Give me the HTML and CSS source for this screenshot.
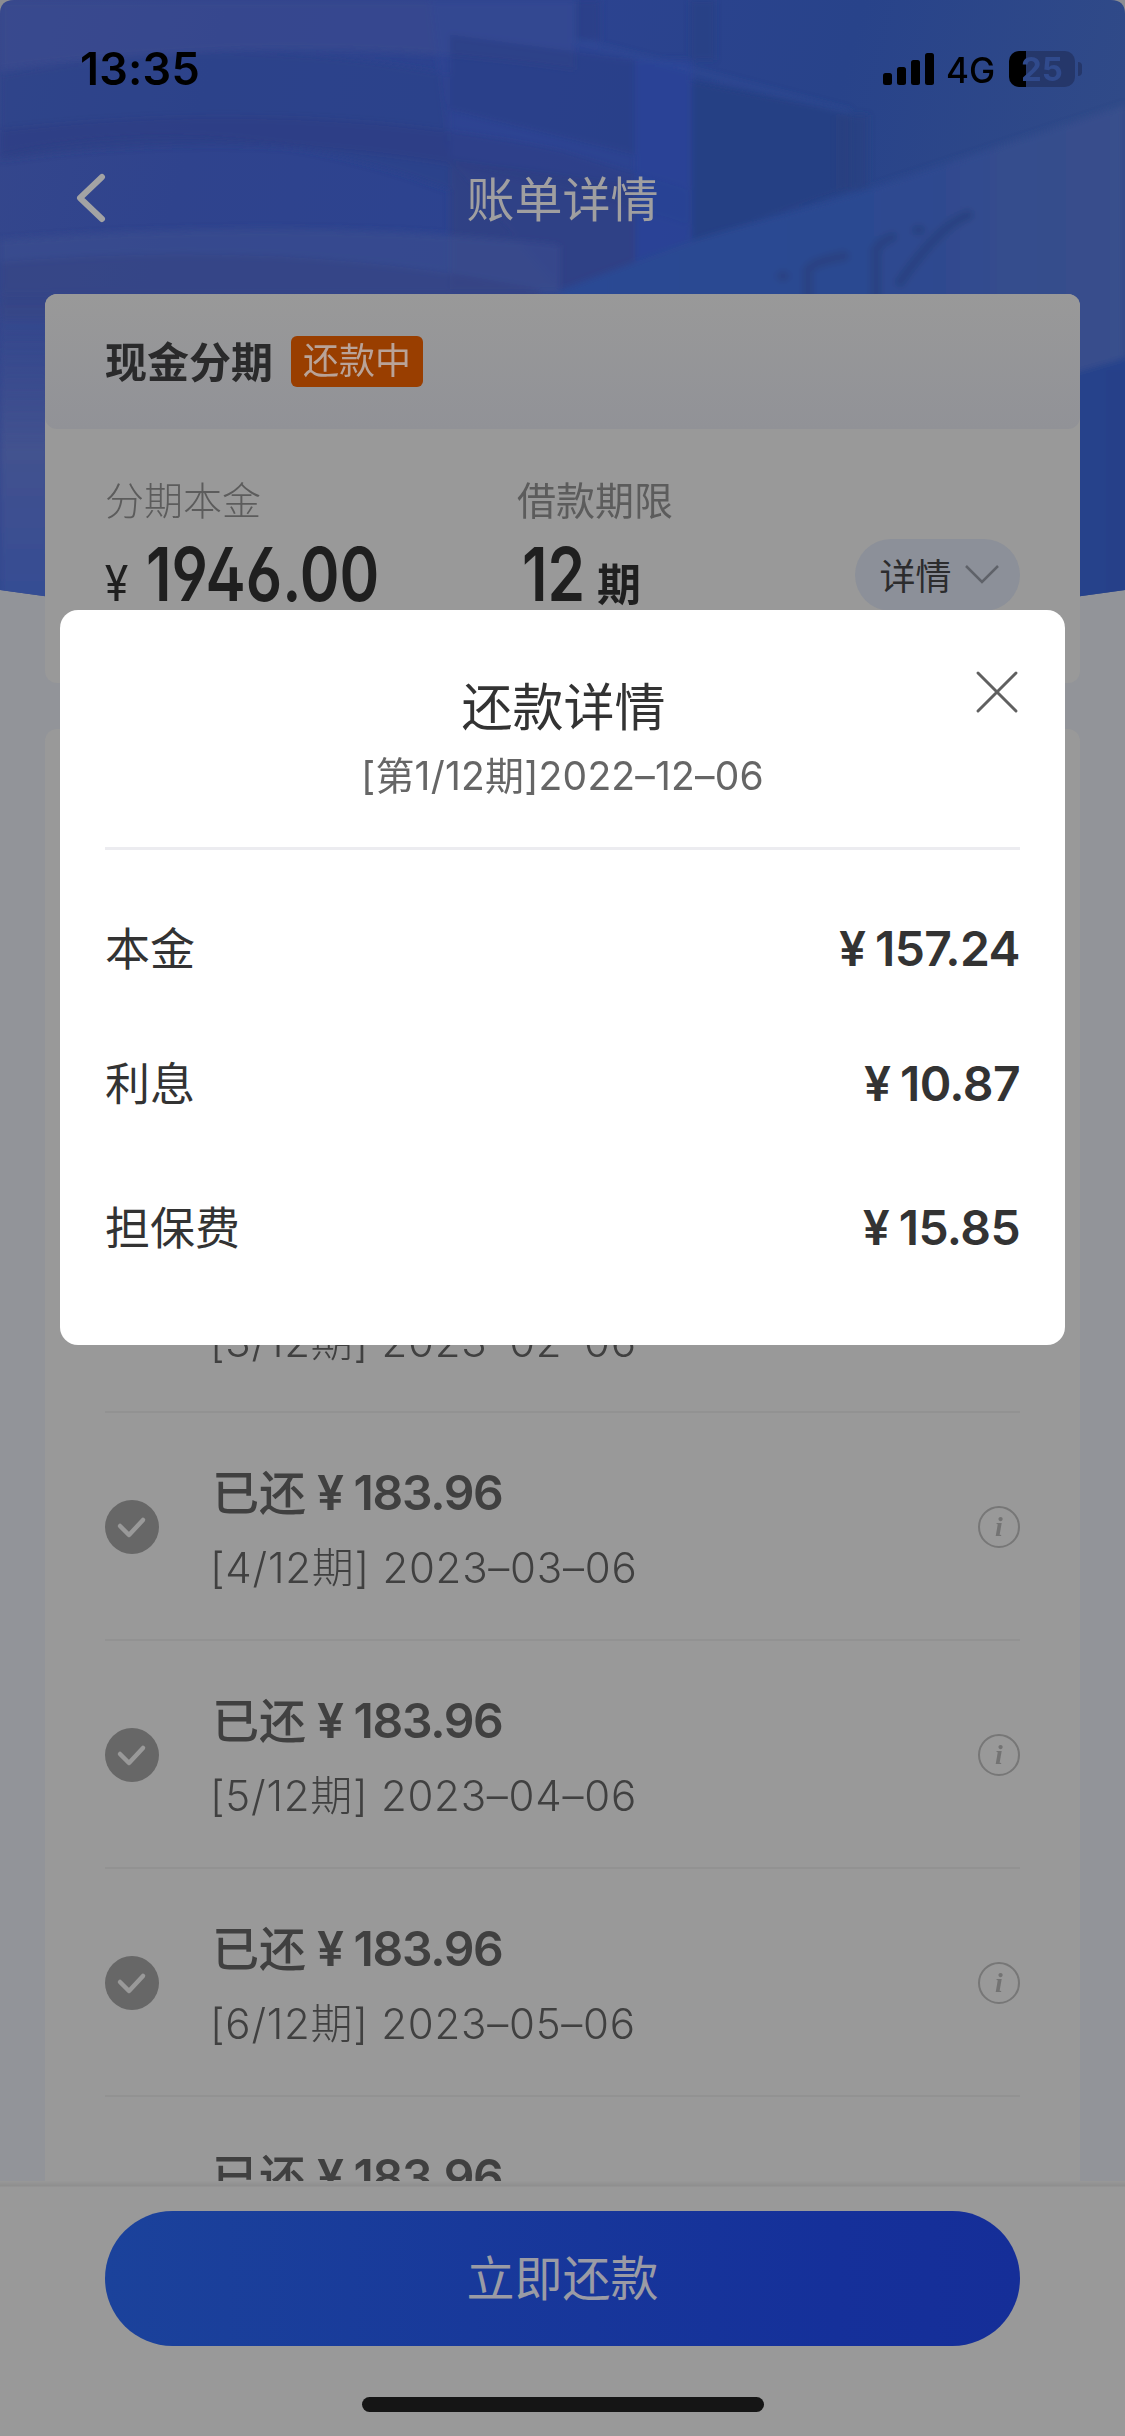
FILE: index.html
```html
<!DOCTYPE html>
<html lang="zh-CN">
<head>
<meta charset="utf-8">
<title>账单详情</title>
<link rel="stylesheet" href="styles.css">
</head>
<body>
<div class="screen">
  <svg class="hero" viewBox="0 0 1125 620" width="1125" height="620" aria-hidden="true">
    <defs>
      <linearGradient id="sky" x1="0" y1="0" x2="1" y2="0.15">
        <stop offset="0" stop-color="#35478c"/>
        <stop offset="0.2" stop-color="#2f438d"/>
        <stop offset="0.5" stop-color="#2c4390"/>
        <stop offset="0.75" stop-color="#28438a"/>
        <stop offset="1" stop-color="#304a88"/>
      </linearGradient>
      <linearGradient id="wall" x1="0" y1="0" x2="1" y2="0">
        <stop offset="0" stop-color="#2b4894"/>
        <stop offset="0.55" stop-color="#2c4891"/>
        <stop offset="1" stop-color="#374f8c"/>
      </linearGradient>
      <linearGradient id="side" x1="0" y1="0" x2="0" y2="1">
        <stop offset="0" stop-color="#3c4f90" stop-opacity="0"/>
        <stop offset="0.5" stop-color="#43528f"/>
        <stop offset="1" stop-color="#334c94"/>
      </linearGradient>
      <clipPath id="sweep"><path d="M0 14Q0 0 14 0H1111Q1125 0 1125 14V590Q562 672 0 590Z"/></clipPath>
      <filter id="soft" x="-10%" y="-10%" width="120%" height="120%"><feGaussianBlur stdDeviation="3"/></filter>
    </defs>
    <rect width="1125" height="24" fill="#8b8d92"/>
    <g clip-path="url(#sweep)">
      <rect width="1125" height="620" fill="url(#sky)"/>
      <g filter="url(#soft)">
        <path d="M0 0H575V70Q300 30 0 70Z" fill="#3a4b90" opacity=".6"/>
        <path d="M0 75Q240 30 450 75V190Q220 105 0 155Z" fill="#2c3f88" opacity=".5"/>
        <path d="M430 0H600V50L690 65V290H560L450 160Z" fill="#2f4596" opacity=".4"/>
        <path d="M0 130Q300 95 560 150L690 190V225Q350 110 0 160Z" fill="#2b3c82" opacity=".5"/>
        <path d="M450 35L635 60V155L450 110Z" fill="#2a3c82" opacity=".5"/>
        <path d="M635 60H692V240L635 262Z" fill="#2b4397" opacity=".75"/>
        <path d="M692 80L850 112V190L692 242Z" fill="#264082" opacity=".85"/>
        <path d="M450 160L635 185V265L560 290H450Z" fill="#30407f" opacity=".6"/>
        <path d="M0 240Q300 215 560 245V294H0Z" fill="#3e4e90" opacity=".6"/>
        <path d="M0 262Q300 238 540 290V320H0Z" fill="#374482" opacity=".6"/>
        <path d="M575 0V40L850 112" stroke="#3452a0" stroke-width="5" fill="none" opacity=".3"/>
        <path d="M575 0H600V40H575ZM690 0H715V60H690Z" fill="#263e7e" opacity=".4"/>
        <path d="M836 115H868V190H836Z" fill="#263e7e" opacity=".55"/>
        <path d="M560 290L694 240L880 185L1125 105V400H540Z" fill="url(#wall)"/>
        <path d="M990 150L1125 105V400H990Z" fill="#3b508d" opacity=".35"/>
        <g fill="none" stroke="#283e79" stroke-width="11" stroke-linecap="round" opacity=".55">
          <path d="M782 276H784"/><path d="M808 300V270Q812 262 844 256"/>
          <path d="M876 300V250Q880 242 892 237"/><path d="M917 230H920"/>
          <path d="M900 282Q940 225 968 215"/>
        </g>
        <rect y="280" width="50" height="340" fill="url(#side)"/>
        <path d="M1070 374L1135 355V620H1070Z" fill="#28438b"/>
        <path d="M1106 370H1125V600H1106Z" fill="#243f88" opacity=".6"/>
      </g>
    </g>
  </svg>

  <header class="status">
    <span class="clock">13:35</span>
    <span class="radio">
      <svg class="bars" viewBox="0 0 51 32" width="51" height="32"><rect y="20" width="9" height="12" rx="2.5"/><rect x="14" y="14" width="9" height="18" rx="2.5"/><rect x="28" y="7" width="9" height="25" rx="2.5"/><rect x="42" width="9" height="32" rx="2.5"/></svg>
      <span class="net">4G</span>
      <span class="battery">25</span>
      <span class="nub"></span>
    </span>
  </header>
  <nav class="nav">
    <svg class="back" viewBox="0 0 32 50" width="32" height="50"><path d="M27 4L5 25L27 46"/></svg>
    <h1>账单详情</h1>
  </nav>

  <main class="content">
    <section class="card summary">
      <div class="summary-head"><h2>现金分期</h2><span class="tag">还款中</span></div>
      <div class="summary-body">
        <div class="col principal"><span class="label light">分期本金</span><span class="figure"><span class="yen">¥</span><span class="num">1946.00</span></span></div>
        <div class="col term"><span class="label">借款期限</span><span class="figure"><span class="num">12</span><span class="unit">期</span></span></div>
        <span class="more">详情<svg viewBox="0 0 34 20" width="34" height="20"><path d="M1 2L17 18L33 2"/></svg></span>
      </div>
    </section>

    <section class="card plan">
      <div class="row past"><p class="due">[3/12期] 2023–02–06</p></div>
      <div class="row">
        <svg class="check" viewBox="0 0 54 54" width="54" height="54"><circle cx="27" cy="27" r="27"/><path d="M15 26L24 35L38 20"/></svg>
        <div class="entry"><p class="paid">已还<span class="money">¥ 183.96</span></p><p class="due">[4/12期] 2023–03–06</p></div>
        <span class="info">i</span>
      </div>
      <div class="row">
        <svg class="check" viewBox="0 0 54 54" width="54" height="54"><circle cx="27" cy="27" r="27"/><path d="M15 26L24 35L38 20"/></svg>
        <div class="entry"><p class="paid">已还<span class="money">¥ 183.96</span></p><p class="due">[5/12期] 2023–04–06</p></div>
        <span class="info">i</span>
      </div>
      <div class="row">
        <svg class="check" viewBox="0 0 54 54" width="54" height="54"><circle cx="27" cy="27" r="27"/><path d="M15 26L24 35L38 20"/></svg>
        <div class="entry"><p class="paid">已还<span class="money">¥ 183.96</span></p><p class="due">[6/12期] 2023–05–06</p></div>
        <span class="info">i</span>
      </div>
      <div class="row next">
        <p class="paid">已还<span class="money">¥ 183.96</span></p>
      </div>
    </section>
  </main>

  <footer class="bottom">
    <button class="pay" type="button">立即还款</button>
    <span class="home"></span>
  </footer>

  <div class="dialog" role="dialog">
    <div class="dialog-head">
      <h3>还款详情</h3>
      <p>[第1/12期]2022–12–06</p>
      <svg class="close" viewBox="0 0 44 44" width="44" height="44"><path d="M3 3L41 41M41 3L3 41"/></svg>
    </div>
    <dl>
      <div class="item"><dt>本金</dt><dd>¥ 157.24</dd></div>
      <div class="item"><dt>利息</dt><dd>¥ 10.87</dd></div>
      <div class="item last"><dt>担保费</dt><dd>¥ 15.85</dd></div>
    </dl>
  </div>
</div>
</body>
</html>
```
FILE: styles.css
```css
* { box-sizing: border-box; margin: 0; padding: 0; }
body { width: 1125px; height: 2436px; overflow: hidden; font-family: Inter, "Noto Sans CJK SC", sans-serif; }
.screen { position: relative; display: flex; flex-direction: column; height: 2436px; background: #929499; overflow: hidden; }
.hero { position: absolute; left: 0; top: 0; }
.status, .nav, .content, .bottom { position: relative; }

.status { display: flex; justify-content: space-between; align-items: center; height: 138px; padding: 0 43px 0 80px; color: #000; }
.clock { font-size: 45px; font-weight: 600; line-height: 54px; letter-spacing: .2px; }
.radio { display: flex; align-items: center; }
.bars { fill: #000; }
.net { width: 63px; margin: 1px 0 0 12px; font-size: 35px; font-weight: 500; line-height: 44px; white-space: nowrap; }
.battery { width: 66px; height: 36px; padding-left: 12px; border-radius: 10px; background: linear-gradient(90deg, #000 17px, #25376a 17px); color: #304a8c; font-size: 33px; font-weight: 700; line-height: 36px; }
.nub { width: 4px; height: 14px; margin-left: 3px; border-radius: 0 4px 4px 0; background: #25376a; }

.nav { display: flex; justify-content: center; align-items: center; height: 120px; padding-top: 3px; margin-bottom: 36px; color: #a09fa0; }
.nav h1 { font-size: 48px; font-weight: 400; line-height: 60px; }
.back { position: absolute; left: 75px; top: 35px; fill: none; stroke: #a3a3a4; stroke-width: 6; stroke-linecap: round; stroke-linejoin: round; }

.content { flex: 1; min-height: 0; padding: 0 45px; overflow: hidden; }
.card { background: #999; border-radius: 12px; }
.summary { height: 389px; margin-bottom: 46px; }
.summary-head { display: flex; align-items: center; gap: 18px; height: 135px; padding: 0 60px; border-radius: 12px; background: linear-gradient(#999, #919297); color: #2a2a2b; }
.summary-head h2 { padding-top: 2px; font-size: 42px; font-weight: 700; line-height: 51px; }
.tag { height: 51px; padding: 0 12px; border-radius: 6px; background: #993e00; color: #b9a398; font-size: 36px; line-height: 51px; }
.summary-body { position: relative; display: flex; padding: 46px 60px 0; }
.col { display: flex; flex-direction: column; width: 412px; }
.label { font-size: 39px; line-height: 52px; color: #5c5c5c; }
.light { font-weight: 300; }
.figure { display: flex; align-items: baseline; height: 80px; margin-top: 7px; line-height: 80px; color: #1f1f1f; }
.yen { width: 41px; font-size: 50px; font-family: Roboto, sans-serif; font-weight: 400; transform: scaleX(.88); transform-origin: 0 0; }
.num { font-size: 74px; font-weight: 600; font-feature-settings: "ss01"; white-space: nowrap; transform: scaleX(.815); transform-origin: 0 0; }
.term .num { width: 75px; margin-left: 5px; }
.unit { font-size: 44px; font-weight: 700; }
.more { position: absolute; right: 60px; top: 110px; display: flex; align-items: center; justify-content: center; gap: 13px; width: 165px; height: 72px; padding: 0 0 2px 3px; border-radius: 36px; background: #8c9099; color: #2c2c2d; font-size: 36px; }
.more svg { fill: none; stroke: #5f6269; stroke-width: 2.5; }

.plan { height: 1600px; padding: 456px 60px 0; }
.row { display: flex; align-items: center; height: 228px; border-bottom: 2px solid #929292; color: #404040; }
.past { align-items: flex-end; padding: 0 0 39px 105px; }
.next { padding: 50px 0 0 107px; align-items: flex-start; border: 0; }
.check { margin-top: 2px; fill: #676767; }
.check path { fill: none; stroke: #999; stroke-width: 4.5; stroke-linecap: round; stroke-linejoin: round; }
.entry { flex: 1; margin-left: 53px; padding-top: 9px; }
.paid { display: flex; gap: 11px; font-size: 47px; font-weight: 500; line-height: 60px; white-space: nowrap; }
.money { font-weight: 600; font-size: 48px; letter-spacing: -1.3px; }
.due { margin: 15px 0 0 -2px; font-size: 42px; font-weight: 300; line-height: 60px; letter-spacing: .75px; white-space: nowrap; }
.past .due { margin-left: 0; }
.info { width: 42px; height: 42px; margin-top: 2px; border: 2.5px solid #777; border-radius: 50%; color: #737373; font: italic 700 28px/37px "Liberation Serif", serif; text-align: center; }

.bottom { display: flex; flex-direction: column; align-items: center; height: 255px; padding-top: 30px; background: linear-gradient(#989898, #8e8e8e 5px, #999 6px); }
.pay { width: 915px; height: 135px; border: 0; border-radius: 68px; background: linear-gradient(90deg, #1b429b, #15309a 80%, #152e98); color: #9a9ba5; font: 400 48px/135px Inter, "Noto Sans CJK SC", sans-serif; }
.home { width: 402px; height: 15px; margin-top: 51px; border-radius: 8px; background: #151515; }

.dialog { position: absolute; left: 60px; top: 610px; width: 1005px; height: 735px; padding: 0 45px; border-radius: 18px; background: #fff; color: #333; }
.dialog-head { position: relative; height: 240px; padding-top: 63px; border-bottom: 3px solid #ececf0; text-align: center; }
.dialog-head h3 { padding-left: 2px; font-size: 51px; font-weight: 400; line-height: 70px; }
.dialog-head p { margin-top: 4px; color: #666; font-size: 39px; font-weight: 400; line-height: 58px; letter-spacing: .2px; }
.close { position: absolute; right: 1px; top: 60px; fill: none; stroke: #606060; stroke-width: 3; stroke-linecap: round; }
.item { display: flex; justify-content: space-between; align-items: center; height: 135px; }
.item:first-child { margin-top: 31px; }
.last { margin-top: 9px; }
.item dt { padding-bottom: 5px; font-size: 45px; }
.item dd { font-size: 48px; font-weight: 600; letter-spacing: -.6px; word-spacing: -2px; }
```
